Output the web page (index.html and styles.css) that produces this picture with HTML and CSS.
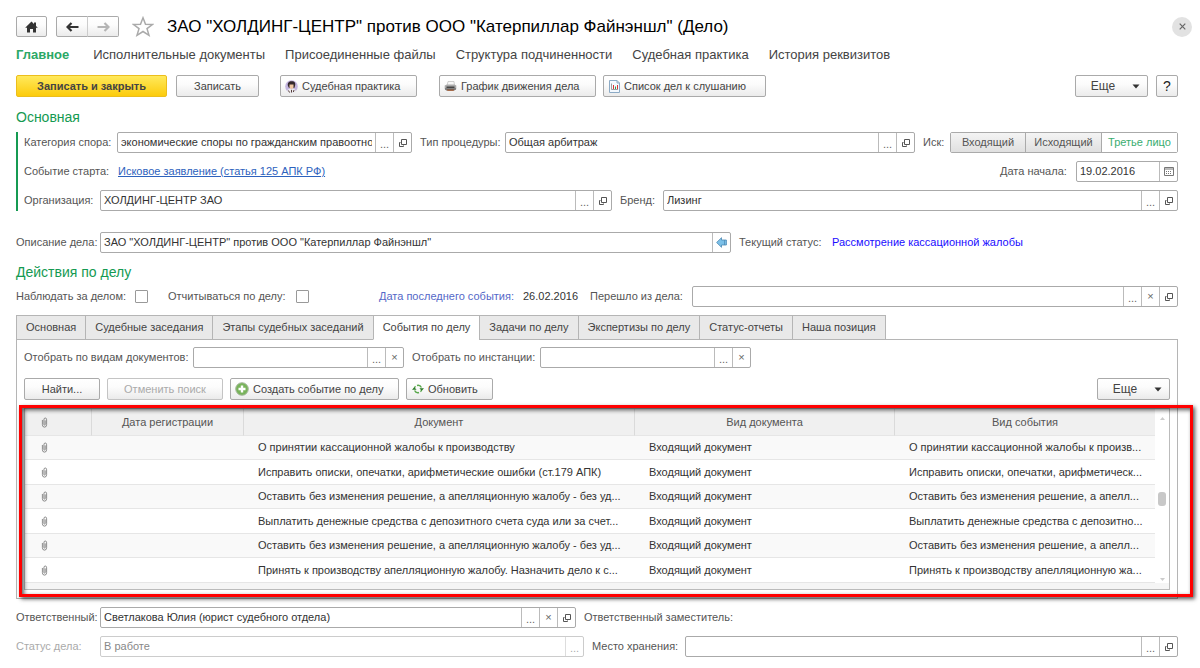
FILE: index.html
```html
<!DOCTYPE html>
<html lang="ru">
<head>
<meta charset="utf-8">
<title>ЗАО "ХОЛДИНГ-ЦЕНТР" против ООО "Катерпиллар Файнэншл" (Дело)</title>
<link rel="stylesheet" href="styles.css">
</head>
<body>
<svg class="defs" aria-hidden="true">
  <symbol id="open" viewBox="0 0 10 10"><path d="M3.500 1.500h5v5h-5z M2.500 4.500h-1v4h4v-1" fill="none" stroke="#555"/></symbol>
  <symbol id="clip" viewBox="0 0 8 13"><path d="M1.500 3.500v5.500a2.500 3 0 0 0 5 0V3.200a1.600 2 0 0 0-3.200 0V9a.8 1 0 0 0 1.500 0V4" fill="none" stroke="#777" stroke-width="1"/></symbol>
  <symbol id="caret" viewBox="0 0 8 5"><path d="M0.500 0.500h7L4 4.500z" fill="#333"/></symbol>
</svg>

<header class="title-row">
  <button class="btn home" aria-label="Начальная страница"><svg width="13" height="12" viewBox="0 0 13 12"><path d="M6.500 0.500 9 3V1.500h2V5l1.800 1.800H11V11.500H8V8H5v3.500H2V6.800H.2z" fill="#333"/></svg></button>
  <div class="history">
    <button class="btn" aria-label="Назад"><svg width="13" height="10" viewBox="0 0 13 10"><path d="M5.500 1 1.500 5l4 4M1.500 5H12.500" fill="none" stroke="#333" stroke-width="2.200"/></svg></button>
    <button class="btn" aria-label="Вперед"><svg width="13" height="10" viewBox="0 0 13 10"><path d="M7.500 1 11.500 5 7.500 9M11.500 5H.5" fill="none" stroke="#b5b5b5" stroke-width="2.200"/></svg></button>
  </div>
  <button class="plain star" aria-label="В избранное"><svg width="22" height="21" viewBox="0 0 22 21"><path d="M11 1.800 13.500 8.200 20.500 8.500 15 12.600 17 19.300 11 15.500 5 19.300 7 12.600 1.500 8.500 8.500 8.200z" fill="none" stroke="#aaa" stroke-width="1.500"/></svg></button>
  <h1>ЗАО "ХОЛДИНГ-ЦЕНТР" против ООО "Катерпиллар Файнэншл" (Дело)</h1>
  <button class="plain close" aria-label="Закрыть"><svg width="7" height="7" viewBox="0 0 7 7"><path d="M.7.7l5.600 5.600M6.300.7.7 6.300" stroke="#666" stroke-width="1.200"/></svg></button>
</header>

<nav class="sections">
  <a href="#" class="current">Главное</a>
  <a href="#">Исполнительные документы</a>
  <a href="#">Присоединенные файлы</a>
  <a href="#">Структура подчиненности</a>
  <a href="#">Судебная практика</a>
  <a href="#">История реквизитов</a>
</nav>

<div class="commands">
  <button class="btn primary">Записать и закрыть</button>
  <button class="btn save">Записать</button>
  <button class="btn icon-btn practice"><svg width="13" height="13" viewBox="0 0 13 13"><circle cx="6.500" cy="6.500" r="6.300" fill="#c3b5df"/><path d="M3 6C2 2.500 4.500 1 6.500 1.200 9.500 1 11 3 10 6l-.7 2H4z" fill="#33282c"/><path d="M4.500 4.500h4v3l-2 2-2-2z" fill="#efc7a4"/><path d="M2 12l1-2.500 2.500-1 1 1.500 1-1.500 2.500 1L11 12l-2 .8H4z" fill="#eee"/><path d="M6.500 10v2.500M3.500 10.500l1 2M9 10l-.6 2" stroke="#553c3c"/></svg>Судебная практика</button>
  <button class="btn icon-btn schedule"><svg width="13" height="13" viewBox="0 0 13 13"><path d="M3 6 4 1.500h6L10.500 6z" fill="#f7f7f7" stroke="#bbb" stroke-width=".7"/><path d="M.7 5.500 3 4.500h7.500l1.800 1V9L10 11H2.500L.7 9z" fill="#aaa"/><path d="M2.500 6.500h8v1.500h-8z" fill="#444"/><path d="M2.500 9h8l-1 2h-6z" fill="#a66b4a"/><path d="M1 9h11" stroke="#555"/></svg>График движения дела</button>
  <button class="btn icon-btn hearing"><svg width="11" height="13" viewBox="0 0 11 13"><path d="M.5.5h7.500l2.500 2.500v9.500H.5z" fill="#f4f9ff" stroke="#8caac5"/><path d="M8 .5V3h2.500" fill="none" stroke="#8caac5"/><path d="M2.500 3.500v6H9" fill="none" stroke="#888" stroke-width=".8"/><path d="M4.500 9V5" stroke="#d33"/><path d="M6.500 9V6.500" stroke="#395"/><path d="M8.500 9V5" stroke="#d33"/></svg>Список дел к слушанию</button>
  <button class="btn more push">Еще<svg width="8" height="5"><use href="#caret"/></svg></button>
  <button class="btn help">?</button>
</div>

<h2 class="main-heading">Основная</h2>
<section class="group">
  <div class="row category-row">
    <label for="category">Категория спора:</label>
    <div class="field"><input id="category" value="экономические споры по гражданским правоотношениям"><button class="dots">...</button><button aria-label="Открыть"><svg width="10" height="10"><use href="#open"/></svg></button></div>
    <label for="procedure" class="next">Тип процедуры:</label>
    <div class="field"><input id="procedure" value="Общая арбитраж"><button class="dots">...</button><button aria-label="Открыть"><svg width="10" height="10"><use href="#open"/></svg></button></div>
    <span class="label next">Иск:</span>
    <div class="toggle"><button>Входящий</button><button>Исходящий</button><button class="on">Третье лицо</button></div>
  </div>
  <div class="row start-row">
    <span class="label">Событие старта:</span>
    <a href="#" class="doc-link">Исковое заявление (статья 125 АПК РФ)</a>
    <label for="start">Дата начала:</label>
    <div class="field"><input id="start" value="19.02.2016"><button aria-label="Календарь"><svg width="10" height="9" viewBox="0 0 10 9"><path d="M.5.5h9v8h-9z" fill="none" stroke="#777"/><path d="M1 2h8" stroke="#777"/><path d="M2 4.500h6M2 6.500h6" stroke="#777" stroke-dasharray="1 1"/></svg></button></div>
  </div>
  <div class="row org-row">
    <label for="org">Организация:</label>
    <div class="field"><input id="org" value="ХОЛДИНГ-ЦЕНТР ЗАО"><button class="dots">...</button><button aria-label="Открыть"><svg width="10" height="10"><use href="#open"/></svg></button></div>
    <label for="brand" class="next">Бренд:</label>
    <div class="field"><input id="brand" value="Лизинг"><button class="dots">...</button><button aria-label="Открыть"><svg width="10" height="10"><use href="#open"/></svg></button></div>
  </div>
</section>

<div class="row description-row">
  <label for="description">Описание дела:</label>
  <div class="field"><input id="description" value="ЗАО &quot;ХОЛДИНГ-ЦЕНТР&quot; против ООО &quot;Катерпиллар Файнэншл&quot;"><button aria-label="Заполнить"><svg width="11" height="11" viewBox="0 0 11 11"><path d="M.6 5.500 5.500.7V3h4.900v5H5.500v2.300z" fill="#7cc0e8" stroke="#4a88b3" stroke-width=".8"/><path d="M8.500 3v5" stroke="#4a88b3" stroke-width=".7"/></svg></button></div>
  <span class="label next">Текущий статус:</span>
  <span class="status">Рассмотрение кассационной жалобы</span>
</div>

<h2 class="actions-heading">Действия по делу</h2>
<div class="row watch-row">
  <label for="watch">Наблюдать за делом:</label>
  <div><input type="checkbox" id="watch"></div>
  <label for="report">Отчитываться по делу:</label>
  <div><input type="checkbox" id="report"></div>
  <span class="last-event">Дата последнего события:</span>
  <span class="value">26.02.2016</span>
  <label for="from-case">Перешло из дела:</label>
  <div class="field"><input id="from-case"><button class="dots">...</button><button aria-label="Очистить">×</button><button aria-label="Открыть"><svg width="10" height="10"><use href="#open"/></svg></button></div>
</div>

<div class="tabs" role="tablist">
  <button role="tab">Основная</button>
  <button role="tab">Судебные заседания</button>
  <button role="tab">Этапы судебных заседаний</button>
  <button role="tab" aria-selected="true" class="active">События по делу</button>
  <button role="tab">Задачи по делу</button>
  <button role="tab">Экспертизы по делу</button>
  <button role="tab">Статус-отчеты</button>
  <button role="tab">Наша позиция</button>
</div>
<section class="panel">
  <div class="row filter-row">
    <label for="doc-kind">Отобрать по видам документов:</label>
    <div class="field"><input id="doc-kind"><button class="dots">...</button><button aria-label="Очистить">×</button></div>
    <label for="instance" class="next">Отобрать по инстанции:</label>
    <div class="field"><input id="instance"><button class="dots">...</button><button aria-label="Очистить">×</button></div>
  </div>
  <div class="list-commands">
    <button class="btn find">Найти...</button>
    <button class="btn cancel" disabled>Отменить поиск</button>
    <button class="btn icon-btn create"><svg width="14" height="14" viewBox="0 0 14 14"><circle cx="7" cy="7" r="6.300" fill="#78b35a" stroke="#a8b8a0"/><path d="M7 3.500v7M3.500 7h7" stroke="#fff" stroke-width="2.400"/></svg>Создать событие по делу</button>
    <button class="btn icon-btn refresh"><svg width="12" height="12" viewBox="0 0 12 12"><path d="M2.300 6A3.700 3.700 0 0 1 3.500 3.300M5 2.500A3.700 3.700 0 0 1 9.400 4.500M9.700 6A3.700 3.700 0 0 1 8.500 8.700M7 9.500A3.700 3.700 0 0 1 2.600 7.500" fill="none" stroke="#5aa84c" stroke-width="1.400"/><path d="M0 6.800h4.600L2.300 4.200zM7.400 5.200H12L9.700 7.800z" fill="#2c7a2a"/></svg>Обновить</button>
    <button class="btn more push">Еще<svg width="8" height="5"><use href="#caret"/></svg></button>
  </div>
  <div class="list">
    <table>
      <colgroup><col class="c-clip"><col class="c-date"><col class="c-doc"><col class="c-kind"><col class="c-event"></colgroup>
      <thead><tr><th class="clip"><svg width="7" height="11"><use href="#clip"/></svg></th><th>Дата регистрации</th><th>Документ</th><th>Вид документа</th><th>Вид события</th></tr></thead>
      <tbody>
        <tr><td class="clip"><svg width="7" height="11"><use href="#clip"/></svg></td><td></td><td>О принятии кассационной жалобы к производству</td><td>Входящий документ</td><td>О принятии кассационной жалобы к произв...</td></tr>
        <tr><td class="clip"><svg width="7" height="11"><use href="#clip"/></svg></td><td></td><td>Исправить описки, опечатки, арифметические ошибки (ст.179 АПК)</td><td>Входящий документ</td><td>Исправить описки, опечатки, арифметическ...</td></tr>
        <tr><td class="clip"><svg width="7" height="11"><use href="#clip"/></svg></td><td></td><td>Оставить без изменения решение, а апелляционную жалобу - без уд...</td><td>Входящий документ</td><td>Оставить без изменения решение, а апелл...</td></tr>
        <tr><td class="clip"><svg width="7" height="11"><use href="#clip"/></svg></td><td></td><td>Выплатить денежные средства с депозитного счета суда или за счет...</td><td>Входящий документ</td><td>Выплатить денежные средства с депозитно...</td></tr>
        <tr><td class="clip"><svg width="7" height="11"><use href="#clip"/></svg></td><td></td><td>Оставить без изменения решение, а апелляционную жалобу - без уд...</td><td>Входящий документ</td><td>Оставить без изменения решение, а апелл...</td></tr>
        <tr><td class="clip"><svg width="7" height="11"><use href="#clip"/></svg></td><td></td><td>Принять к производству апелляционную жалобу. Назначить дело к с...</td><td>Входящий документ</td><td>Принять к производству апелляционную жа...</td></tr>
      </tbody>
    </table>
    <div class="scroll"><svg width="5" height="3" viewBox="0 0 5 3"><path d="M0 3h5L2.500 0z" fill="#ccc"/></svg><span class="thumb"></span><svg width="5" height="3" viewBox="0 0 5 3"><path d="M0 0h5L2.500 3z" fill="#ccc"/></svg></div>
    <div class="highlight"></div>
  </div>
</section>

<div class="row responsible-row">
  <label for="responsible">Ответственный:</label>
  <div class="field"><input id="responsible" value="Светлакова Юлия (юрист судебного отдела)"><button class="dots">...</button><button aria-label="Очистить">×</button><button aria-label="Открыть"><svg width="10" height="10"><use href="#open"/></svg></button></div>
  <span class="label next">Ответственный заместитель:</span>
</div>
<div class="row state-row">
  <label for="state" class="muted">Статус дела:</label>
  <div class="field off"><input id="state" value="В работе" disabled><button class="dots" disabled>...</button></div>
  <label for="storage" class="next">Место хранения:</label>
  <div class="field"><input id="storage"><button class="dots">...</button><button aria-label="Открыть"><svg width="10" height="10"><use href="#open"/></svg></button></div>
</div>
</body>
</html>
```
FILE: styles.css
```css
* { box-sizing: border-box; }
body {
  margin: 0;
  padding: 16px 22px 10px 16px;
  background: #fff;
  color: #555;
  font: 11px/15px "Liberation Sans", Arial, sans-serif;
}
button, input { font: inherit; color: #444; margin: 0; }
button { padding: 0; white-space: nowrap; }
svg { display: block; flex: none; }
.defs { position: absolute; width: 0; height: 0; }
h1, h2 { margin: 0; font-weight: normal; }

.btn {
  display: flex;
  align-items: center;
  justify-content: center;
  height: 22px;
  border: 1px solid #aaa;
  border-radius: 2px;
  background: linear-gradient(#fff, #fcfcfc 40%, #ebebeb);
}
.plain { border: 0; background: none; display: flex; align-items: center; justify-content: center; }

.title-row { display: flex; align-items: center; height: 21px; }
.title-row .btn { height: 21px; width: 31px; }
.home { margin-right: 9px; }
.history { display: flex; }
.history .btn:first-child { border-radius: 2px 0 0 2px; width: 32px; }
.history .btn:last-child { border-left-color: #ccc; border-radius: 0 2px 2px 0; margin-left: -1px; width: 32px; }
.star { margin-left: 13px; }
h1 { margin-left: 13px; font-size: 17px; line-height: 21px; color: #000; white-space: nowrap; }
.close { width: 20px; height: 20px; border-radius: 50%; background: #e2e2e2; margin: 0 -14px 0 auto; }

.sections { display: flex; gap: 20px; margin-top: 9px; margin-bottom: 12px; font-size: 13px; line-height: 17px; }
.sections a { color: #444; text-decoration: none; white-space: nowrap; }
.sections .current { margin-right: 4px; color: #2ba866; font-weight: bold; }

.commands { display: flex; }
.primary { width: 151px; border-color: #ecbe1c; background: linear-gradient(#ffe95c, #fccb0c); font-weight: bold; }
.save { width: 83px; margin-left: 9px; }
.icon-btn { justify-content: flex-start; gap: 4px; padding-left: 4px; }
.practice { width: 137px; margin-left: 21px; }
.schedule { width: 157px; margin-left: 22px; }
.hearing { width: 163px; margin-left: 7px; padding-left: 5px; }
.more { width: 73px; gap: 17px; padding-left: 8px; font-size: 12px; }
.push { margin-left: auto; }
.help { width: 22px; margin-left: 8px; font-size: 14px; color: #222; }

h2 { color: #159a52; font-size: 14px; line-height: 18px; }
.main-heading { margin-top: 11px; }
.actions-heading { margin-top: 10px; }

.group { display: grid; gap: 8px; margin-top: 6px; padding-left: 6px; border-left: 2px solid #159a52; }
.row { display: grid; align-items: center; height: 21px; white-space: nowrap; }
.next { padding-left: 8px; }
.category-row { grid-template-columns: 93px 295fr 93px 410fr 35px 228px; }
.start-row { grid-template-columns: 94px 1fr 76px 102px; }
.org-row { grid-template-columns: 76px 512fr 51px 515fr; }
.doc-link { color: #2d62bd; }

.field { display: flex; height: 21px; min-width: 0; border: 1px solid #aaa; border-radius: 2px; background: #fff; }
.field input { flex: 1; min-width: 0; width: 0; padding: 0 3px; border: 0; outline: 0; background: none; color: #333; }
.field button { display: flex; align-items: center; justify-content: center; width: 18px; border: 0; border-left: 1px solid #bbb; background: none; color: #666; }
.field .dots { padding-top: 4px; }

.toggle { display: grid; grid-template-columns: 75fr 76fr 75fr; height: 21px; border: 1px solid #aaa; border-radius: 2px; }
.toggle button { min-width: 0; border: 0; border-right: 1px solid #aaa; background: linear-gradient(#f4f4f4, #e0e0e0); color: #555; }
.toggle .on { border-right: 0; background: #fff; color: #3aad70; }

.description-row { grid-template-columns: 84px 631fr 101px 346fr; margin-top: 21px; }
.status { color: #1a0dff; }
.watch-row { grid-template-columns: 119px 33px 128px 83px 144px 67px 102px 1fr; margin-top: 5px; }
.watch-row input[type="checkbox"] { display: block; appearance: none; width: 13px; height: 13px; border: 1px solid #999; border-radius: 1px; background: #fff; }
.last-event { color: #5468c8; }
.value { color: #333; }

.tabs { display: flex; margin-top: 8px; }
.tabs button { position: relative; height: 25px; margin-right: -1px; padding: 0 9px; border: 1px solid #b5b5b5; background: #e9e9e9; color: #444; }
.tabs .active { border-bottom-color: #fff; background: #fff; }

.panel { margin-top: -1px; padding: 7px 7px 8px; border: 1px solid #b5b5b5; }
.filter-row { grid-template-columns: 169px 211px 136px 211px; }
.list-commands { display: flex; gap: 7px; margin-top: 10px; }
.find { width: 76px; }
.cancel { width: 116px; color: #aaa; border-color: #c4c4c4; }
.create { width: 169px; }
.refresh { width: 87px; padding-left: 5px; }

.list { position: relative; display: flex; margin-top: 8px; padding-bottom: 6px; border: 1px solid #bbb; background: linear-gradient(to top, #f5f5f5 6px, #fff 6px); }
table { flex: 1; min-width: 0; border-collapse: separate; border-spacing: 0; table-layout: fixed; width: 100%; }
.c-clip { width: 67px; }
.c-date { width: 152px; }
.c-doc { width: 391px; }
th, td { padding: 0; overflow: hidden; white-space: nowrap; border-bottom: 1px solid #e6e6e6; }
th { height: 27px; border-right: 1px solid #dadada; background: #f0f0f0; font-weight: normal; color: #555; }
th:last-child { border-right: 0; }
td { height: 24px; padding-left: 14px; color: #333; }
tbody tr:nth-child(even) td { height: 25px; }
tbody tr:nth-child(odd) td { background: #f9f9f9; }
th.clip, td.clip { padding-left: 16px; }
.scroll { display: flex; flex-direction: column; align-items: center; justify-content: space-between; width: 14px; padding: 8px 0 2px; background: #fff; }
.thumb { width: 8px; height: 14px; border-radius: 3px; background: #c8c8c8; }
.highlight {
  position: absolute;
  inset: -4px -24px -8px -6px;
  border: 3px solid #f00;
  box-shadow: 2px 2px 4px rgba(0, 0, 0, .65), inset 2px 2px 4px rgba(0, 0, 0, .65);
  pointer-events: none;
}

.responsible-row { grid-template-columns: 84px 476fr 602fr; margin-top: 8px; }
.state-row { grid-template-columns: 84px 484fr 101px 493fr; margin-top: 8px; }
.muted { color: #aaa; }
.off { border-color: #ccc; }
.off input { color: #888; }
.off button { border-color: #ddd; color: #aaa; }
```
